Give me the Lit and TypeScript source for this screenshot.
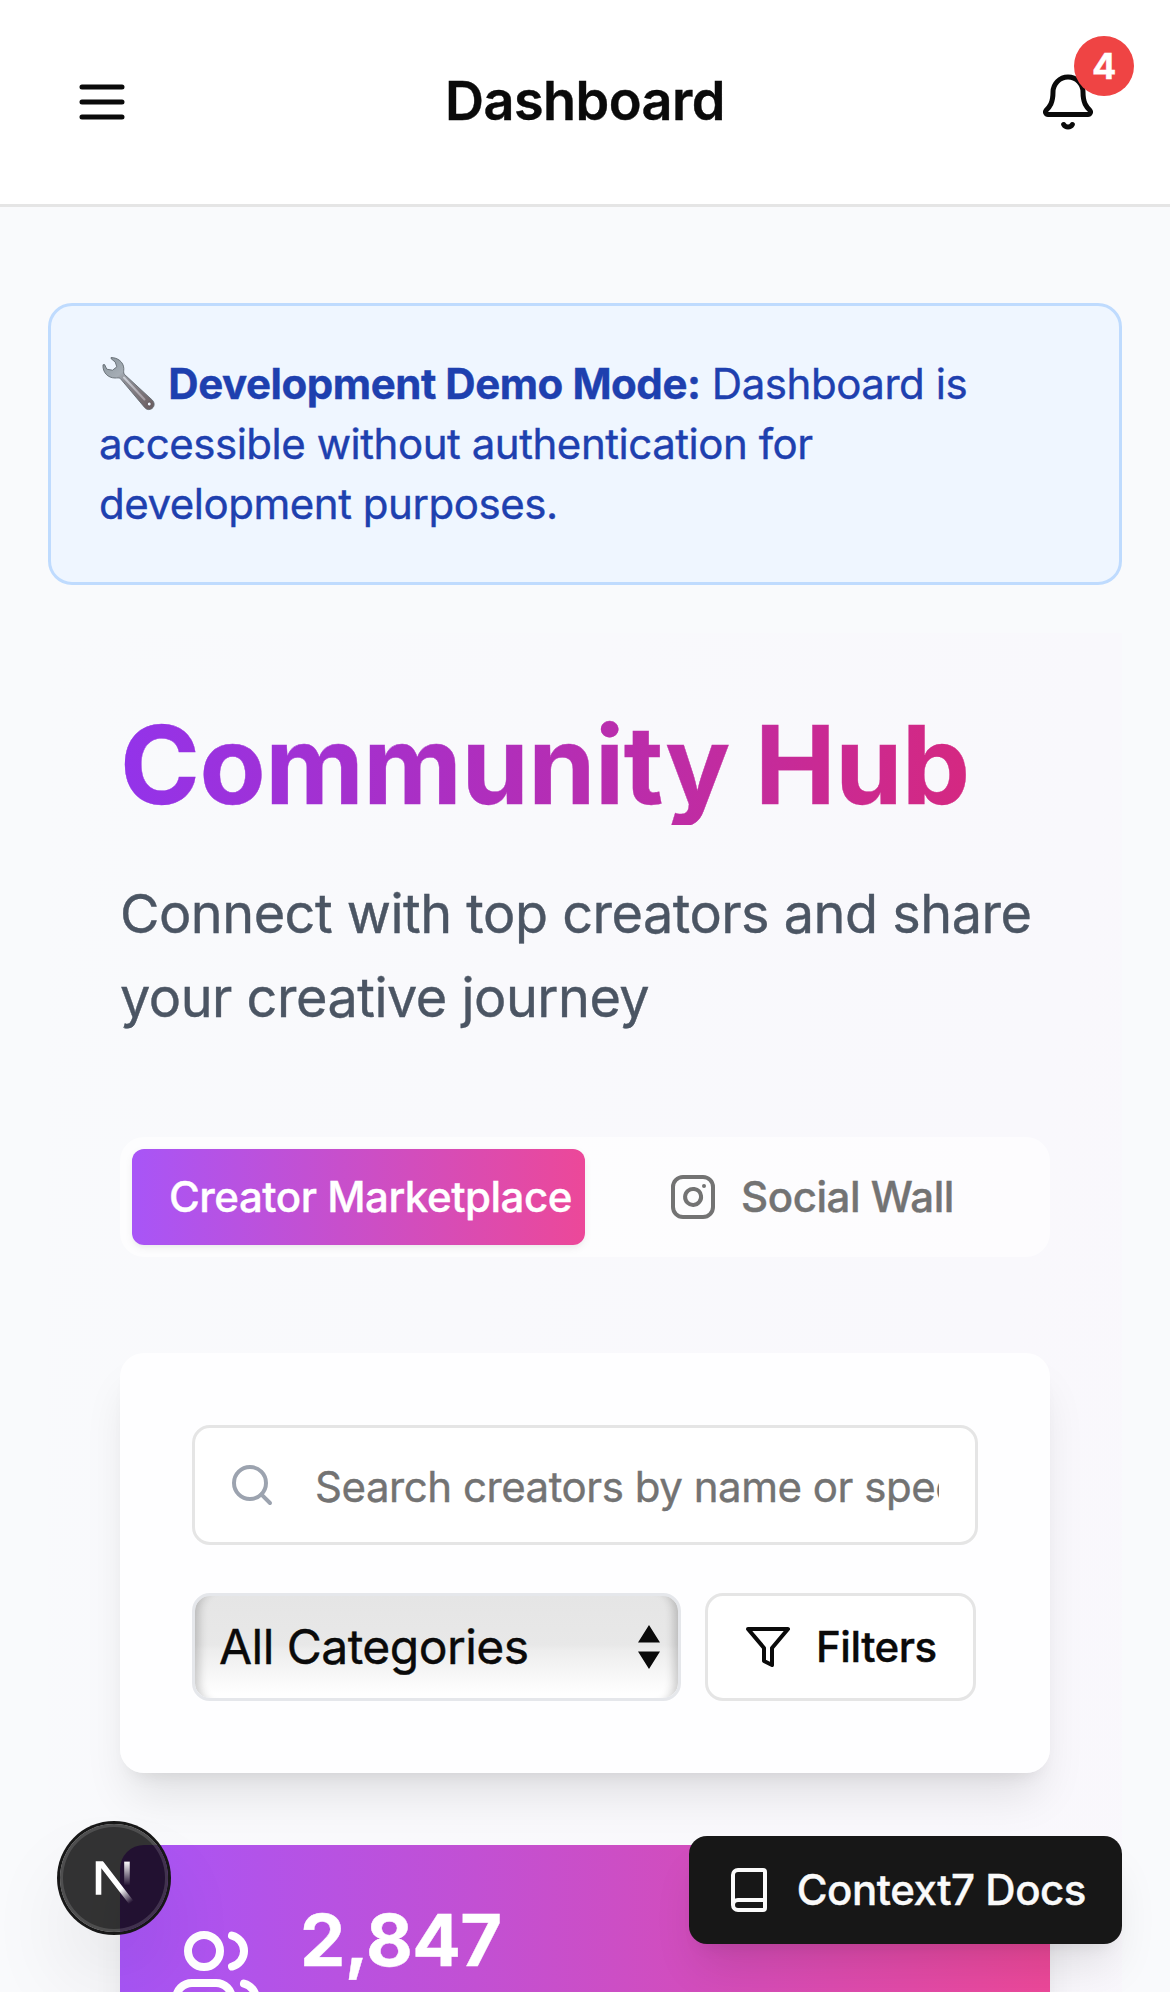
import { LitElement, html, css, svg } from "lit";
import { customElement } from "lit/decorators.js";

const icon = (cls: string, body: unknown) => html`<svg class="icon ${cls}" viewBox="0 0 24 24" aria-hidden="true">${body}</svg>`;

const menuIcon = svg`<path d="M4 6h16M4 12h16M4 18h16"/>`;
const bellIcon = svg`<path d="M10.268 21a2 2 0 0 0 3.464 0"/><path d="M3.262 15.326A1 1 0 0 0 4 17h16a1 1 0 0 0 .74-1.673C19.41 13.956 18 12.499 18 8A6 6 0 0 0 6 8c0 4.499-1.411 5.956-2.738 7.326"/>`;
const instagramIcon = svg`<rect width="20" height="20" x="2" y="2" rx="5"/><path d="M16 11.37A4 4 0 1 1 12.63 8 4 4 0 0 1 16 11.37z"/><path d="M17.5 6.5h.01"/>`;
const searchIcon = svg`<circle cx="11" cy="11" r="8"/><path d="m21 21-4.34-4.34"/>`;
const funnelIcon = svg`<path d="M22 3H2l8 9.46V19l4 2v-8.54L22 3z"/>`;
const usersIcon = svg`<path d="M16 21v-2a4 4 0 0 0-4-4H6a4 4 0 0 0-4 4v2"/><circle cx="9" cy="7" r="4"/><path d="M22 21v-2a4 4 0 0 0-3-3.87"/><path d="M16 3.13a4 4 0 0 1 0 7.75"/>`;
const bookIcon = svg`<path d="M4 19.5v-15A2.5 2.5 0 0 1 6.5 2H19a1 1 0 0 1 1 1v18a1 1 0 0 1-1 1H6.5a1 1 0 0 1 0-5H20"/>`;

const wrench = html`<svg class="wrench" viewBox="0 0 57 60" role="img" aria-label="wrench">
  <defs>
    <linearGradient id="steel" x1="10" y1="5" x2="50" y2="56" gradientUnits="userSpaceOnUse">
      <stop offset="0" stop-color="#8f9aa2"/>
      <stop offset="0.28" stop-color="#a5adb5"/>
      <stop offset="0.42" stop-color="#8d8d94"/>
      <stop offset="1" stop-color="#6b5f62"/>
    </linearGradient>
    <linearGradient id="shine" x1="24" y1="22" x2="50" y2="50" gradientUnits="userSpaceOnUse">
      <stop offset="0" stop-color="#cdd2da"/>
      <stop offset="1" stop-color="#9c9197"/>
    </linearGradient>
  </defs>
  <path fill="url(#steel)" stroke="#626a71" stroke-width="0.9" stroke-linejoin="round"
    d="M12 3.6C18.5 3.4 24.6 8 24.8 14.5C24.8 17 24.3 18.6 25.2 20.2L53.4 46.2C57 50 54.6 55.4 49.8 55.6C48 55.6 46.8 54.8 45.6 53.4L21.4 24.6C20 23.4 18.4 24 16 24C9 24 3.4 18.4 4 10.8L5.6 10.6L7.8 15.2L13.6 16.2L17.8 12.8L16.2 8L12.2 4.8Z"/>
  <path fill="none" stroke="url(#shine)" stroke-width="2" stroke-linecap="round" d="M25 23.5L45.5 45.5"/>
  <circle cx="50.2" cy="50" r="2" fill="#eff6ff" stroke="#5b4f52" stroke-width="0.9"/>
</svg>`;

@customElement("app-root")
export class AppRoot extends LitElement {
  static styles = css`
    :host {
      display: block;
      position: relative;
      height: 1992px;
      overflow: hidden;
      background: #f9fafc;
      color: #0a0a0a;
      font-family: Inter, "Liberation Sans", sans-serif;
      font-size: 42px;
      line-height: 60px;
      letter-spacing: -0.46px;
      -webkit-text-stroke: 0.4px currentColor;
    }
    * { box-sizing: border-box; }
    h1, h2, p { margin: 0; }
    button, input { font: inherit; color: inherit; letter-spacing: inherit; }
    button { border: 0; padding: 0; background: none; }
    .icon {
      display: block;
      flex: none;
      width: 48px;
      height: 48px;
      fill: none;
      stroke: currentColor;
      stroke-width: 2;
      stroke-linecap: round;
      stroke-linejoin: round;
    }
    .icon.md { width: 60px; height: 60px; }
    .icon.lg { width: 96px; height: 96px; }

    .topbar {
      display: flex;
      align-items: center;
      justify-content: space-between;
      height: 207px;
      padding: 0 48px;
      background: #fff;
      border-bottom: 3px solid #e5e5e5;
    }
    .title {
      padding-bottom: 3px;
      font-size: 54px;
      line-height: 84px;
      font-weight: 600;
      letter-spacing: -0.55px;
    }
    .icon-btn {
      position: relative;
      display: grid;
      place-items: center;
      width: 108px;
      height: 108px;
    }
    .count {
      position: absolute;
      top: -12px;
      right: -12px;
      display: grid;
      place-items: center;
      width: 60px;
      height: 60px;
      padding-bottom: 1px;
      border-radius: 50%;
      background: #ef4444;
      color: #fff;
      font-size: 36px;
      line-height: 48px;
      font-weight: 700;
    }

    .main { padding: 96px 48px 0; }
    .notice {
      padding: 48px;
      border: 3px solid #bfdbfe;
      border-radius: 24px;
      background: #eff6ff;
      color: #1e40af;
    }
    .notice strong { font-weight: 700; }
    .wrench {
      display: inline-block;
      width: 57px;
      height: 60px;
      margin: -15px 1px -15px 0;
      vertical-align: 0;
    }

    .hub {
      margin-top: 48px;
      padding: 72px;
      height: 1500px;
      background: linear-gradient(to bottom right, #f9fafc, #f9f8fc, #faf6fd) 0 0 / 100% 6000px no-repeat;
    }
    .hub-title {
      font-size: 108px;
      line-height: 120px;
      font-weight: 700;
      color: transparent;
      background: linear-gradient(to right, #9333ea, #db2777);
      -webkit-background-clip: text;
      background-clip: text;
    }
    .lead {
      margin-top: 47px;
      font-size: 54px;
      line-height: 84px;
      letter-spacing: -0.5px;
      color: #4b5563;
    }
    .tabs {
      display: grid;
      grid-template-columns: 1fr 1fr;
      height: 120px;
      margin-top: 97px;
      padding: 12px;
      border-radius: 24px;
      background: rgba(255, 255, 255, 0.6);
    }
    .tab {
      display: flex;
      align-items: center;
      justify-content: center;
      gap: 24px;
      min-width: 0;
      border-radius: 12px;
      color: #737373;
      font-weight: 500;
      white-space: nowrap;
    }
    .tab.active {
      padding-left: 24px;
      color: #fff;
      background: linear-gradient(to right, #a855f7, #ec4899);
      box-shadow: 0 3px 9px rgba(0, 0, 0, 0.06), 0 3px 6px -3px rgba(0, 0, 0, 0.05);
    }

    .panel {
      margin-top: 96px;
      padding: 72px;
      height: 420px;
      border-radius: 24px;
      background: rgba(255, 255, 255, 0.8);
      box-shadow: 0 30px 45px -9px rgba(0, 0, 0, 0.1), 0 12px 18px -12px rgba(0, 0, 0, 0.1);
    }
    .search {
      display: flex;
      align-items: center;
      gap: 39px;
      height: 120px;
      padding: 0 36px 0 33px;
      border: 3px solid #e5e5e5;
      border-radius: 18px;
      background: #fff;
      color: #9ca3af;
    }
    .search input {
      flex: 1;
      min-width: 0;
      height: 60px;
      margin-top: 4px;
      padding: 0;
      border: 0;
      outline: 0;
      background: transparent;
    }
    .search input::placeholder {
      color: #737373;
      opacity: 1;
      -webkit-text-stroke: 0.4px #737373;
    }
    .filters { display: flex; gap: 24px; margin-top: 48px; }
    .select {
      display: flex;
      flex: none;
      align-items: center;
      justify-content: space-between;
      width: 489px;
      height: 108px;
      padding: 0 18px 0 24px;
      border: 3px solid #e5e7eb;
      border-radius: 18px;
      background: linear-gradient(to bottom, #e5e5e5, #e8e8e8 48%, #ededed 53%, #ffffff 96%);
      box-shadow: inset 14px 0 10px -10px rgba(0, 0, 0, 0.2), inset -14px 0 10px -10px rgba(0, 0, 0, 0.2);
      font-size: 48px;
      letter-spacing: -0.54px;
    }
    .arrows { width: 22px; height: 44px; fill: #0a0a0a; }
    .outline {
      display: flex;
      flex: none;
      align-items: center;
      gap: 24px;
      height: 108px;
      padding: 0 36px;
      border: 3px solid #e5e5e5;
      border-radius: 18px;
      background: #fff;
      font-weight: 500;
    }

    .stat {
      display: flex;
      align-items: center;
      gap: 36px;
      height: 252px;
      margin-top: 72px;
      padding: 48px;
      border-radius: 24px;
      background: linear-gradient(to right, #a855f7, #ec4899);
      box-shadow: 0 30px 45px -9px rgba(0, 0, 0, 0.1), 0 12px 18px -12px rgba(0, 0, 0, 0.1);
      color: #fff;
    }
    .stat-value {
      height: 159px;
      font-size: 72px;
      line-height: 96px;
      font-weight: 700;
      letter-spacing: -0.65px;
    }

    .next {
      position: absolute;
      left: 60px;
      top: 1824px;
      width: 108px;
      height: 108px;
      border-radius: 50%;
      background: rgba(0, 0, 0, 0.8);
      box-shadow: 0 0 0 3px #171717, inset 0 0 0 3px rgba(255, 255, 255, 0.14), 0 48px 96px -24px rgba(0, 0, 0, 0.24);
    }
    .next svg { display: block; width: 108px; height: 108px; }
    .docs {
      position: absolute;
      right: 48px;
      top: 1836px;
      display: flex;
      align-items: center;
      gap: 24px;
      height: 108px;
      padding: 0 36px;
      border-radius: 18px;
      background: #171717;
      color: #fafafa;
      font-weight: 500;
      white-space: nowrap;
      box-shadow: 0 30px 45px -9px rgba(0, 0, 0, 0.1), 0 12px 18px -12px rgba(0, 0, 0, 0.1);
    }
  `;

  render() {
    return html`
      <header class="topbar">
        <button class="icon-btn" aria-label="Menu">${icon("md", menuIcon)}</button>
        <h2 class="title">Dashboard</h2>
        <button class="icon-btn" aria-label="Notifications">${icon("md", bellIcon)}<span class="count">4</span></button>
      </header>
      <main class="main">
        <p class="notice">${wrench} <strong>Development Demo Mode:</strong> Dashboard is accessible without authentication for development purposes.</p>
        <section class="hub">
          <h1 class="hub-title">Community Hub</h1>
          <p class="lead">Connect with top creators and share your creative journey</p>
          <nav class="tabs">
            <button class="tab active">Creator Marketplace</button>
            <button class="tab">${icon("", instagramIcon)}Social Wall</button>
          </nav>
          <div class="panel">
            <label class="search">${icon("", searchIcon)}<input placeholder="Search creators by name or specialty..." /></label>
            <div class="filters">
              <button class="select">All Categories
                <svg class="arrows" viewBox="0 0 22 44" aria-hidden="true"><path d="M11 0L22 17.5H0ZM11 44L22 26.5H0Z"/></svg>
              </button>
              <button class="outline">${icon("", funnelIcon)}Filters</button>
            </div>
          </div>
          <div class="stat">${icon("lg", usersIcon)}<div class="stat-value">2,847</div></div>
        </section>
      </main>
      <button class="next" aria-label="Developer tools">
        <svg viewBox="0 0 36 36" aria-hidden="true">
          <defs>
            <linearGradient id="diag" x1="9.8" y1="10.8" x2="13.2" y2="15.2" gradientUnits="userSpaceOnUse">
              <stop offset="0" stop-color="#fff"/><stop offset="1" stop-color="#fff" stop-opacity="0"/>
            </linearGradient>
            <linearGradient id="stem" x1="0" y1="1.5" x2="0" y2="9.5" gradientUnits="userSpaceOnUse">
              <stop offset="0" stop-color="#fff"/><stop offset="1" stop-color="#fff" stop-opacity="0"/>
            </linearGradient>
            <clipPath id="crop"><path d="M0 1.4H16V17H0Z"/></clipPath>
          </defs>
          <g transform="translate(10.5 11)" fill="none" stroke-width="1.86" clip-path="url(#crop)">
            <path d="M13.3 15.2L2.34 1V12.6" stroke="url(#diag)"/>
            <path d="M10.895 1.5H12.755V13.1H10.895Z" fill="url(#stem)" stroke="none"/>
          </g>
        </svg>
      </button>
      <button class="docs">${icon("", bookIcon)}Context7 Docs</button>
    `;
  }
}
